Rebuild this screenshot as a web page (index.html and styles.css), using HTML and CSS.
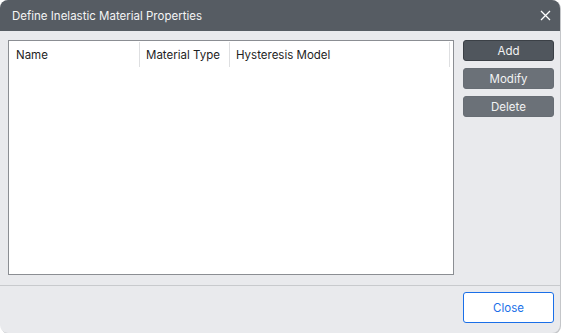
FILE: index.html
```html
<!DOCTYPE html>
<html>
<head>
<meta charset="utf-8">
<link rel="stylesheet" href="styles.css">
</head>
<body>
<div class="dialog">
  <div class="titlebar">
    <span class="title">Define Inelastic Material Properties</span>
    <svg class="close-x" width="11" height="11" viewBox="0 0 11 11"><path d="M1 1 L10 10 M10 1 L1 10" stroke="#ffffff" stroke-width="1.3" fill="none"/></svg>
  </div>
  <div class="content">
    <div class="listbox">
      <div class="header">
        <div class="col c1">Name</div>
        <div class="col c2">Material Type</div>
        <div class="col c3">Hysteresis Model</div>
      </div>
    </div>
    <div class="buttons">
      <button class="btn btn-primary">Add</button>
      <button class="btn">Modify</button>
      <button class="btn">Delete</button>
    </div>
  </div>
  <div class="footer">
    <button class="close-btn">Close</button>
  </div>
</div>
</body>
</html>
```

FILE: styles.css
```css
html, body {
  margin: 0;
  padding: 0;
  background: #ffffff;
}
body {
  font-family: Inter, "Liberation Sans", sans-serif;
  font-size: 11.5px;
}
.dialog {
  width: 560px;
  height: 333px;
  background: #e9eaed;
  border-radius: 8px;
  display: flex;
  flex-direction: column;
  overflow: hidden;
  box-shadow: 1px 1px 0 #c4c6c9;
}
.titlebar {
  height: 31px;
  background: #565c63;
  display: flex;
  align-items: center;
  justify-content: space-between;
  padding: 0 9px 0 12px;
  box-sizing: border-box;
}
.title {
  color: #f4f4f5;
  font-size: 11.5px;
}
.close-x {
  display: block;
}
.content {
  display: flex;
  padding: 9px 6px 0 8px;
  gap: 9px;
}
.listbox {
  width: 446px;
  height: 235px;
  box-sizing: border-box;
  background: #ffffff;
  border: 1px solid #8b8e93;
}
.header {
  display: flex;
  height: 25px;
  margin-top: 1px;
}
.col {
  box-sizing: border-box;
  border-right: 1px solid #dedfe1;
  display: flex;
  align-items: center;
  color: #1e1e1e;
  white-space: nowrap;
}
.c1 { width: 131px; padding-left: 7px; }
.c2 { width: 90px; padding-left: 6px; }
.c3 { width: 220px; padding-left: 6px; }
.buttons {
  display: flex;
  flex-direction: column;
  gap: 7px;
}
.btn {
  width: 91px;
  height: 21px;
  box-sizing: border-box;
  border: 1px solid #676d74;
  border-radius: 3px;
  background: #6b7178;
  color: #f2f3f4;
  font-family: inherit;
  font-size: 11.5px;
  padding: 0;
}
.btn-primary {
  background: #50565d;
  border-color: #3b4046;
}
.footer {
  margin-top: 10px;
  border-top: 1px solid #c8cacd;
  display: flex;
  justify-content: flex-end;
  padding: 6px 6px 0 0;
}
.close-btn {
  width: 91px;
  height: 31px;
  box-sizing: border-box;
  background: #ffffff;
  border: 1px solid #1a6fe8;
  border-radius: 3px;
  color: #1a6fe8;
  font-family: inherit;
  font-size: 11.5px;
  padding: 0;
}
```
